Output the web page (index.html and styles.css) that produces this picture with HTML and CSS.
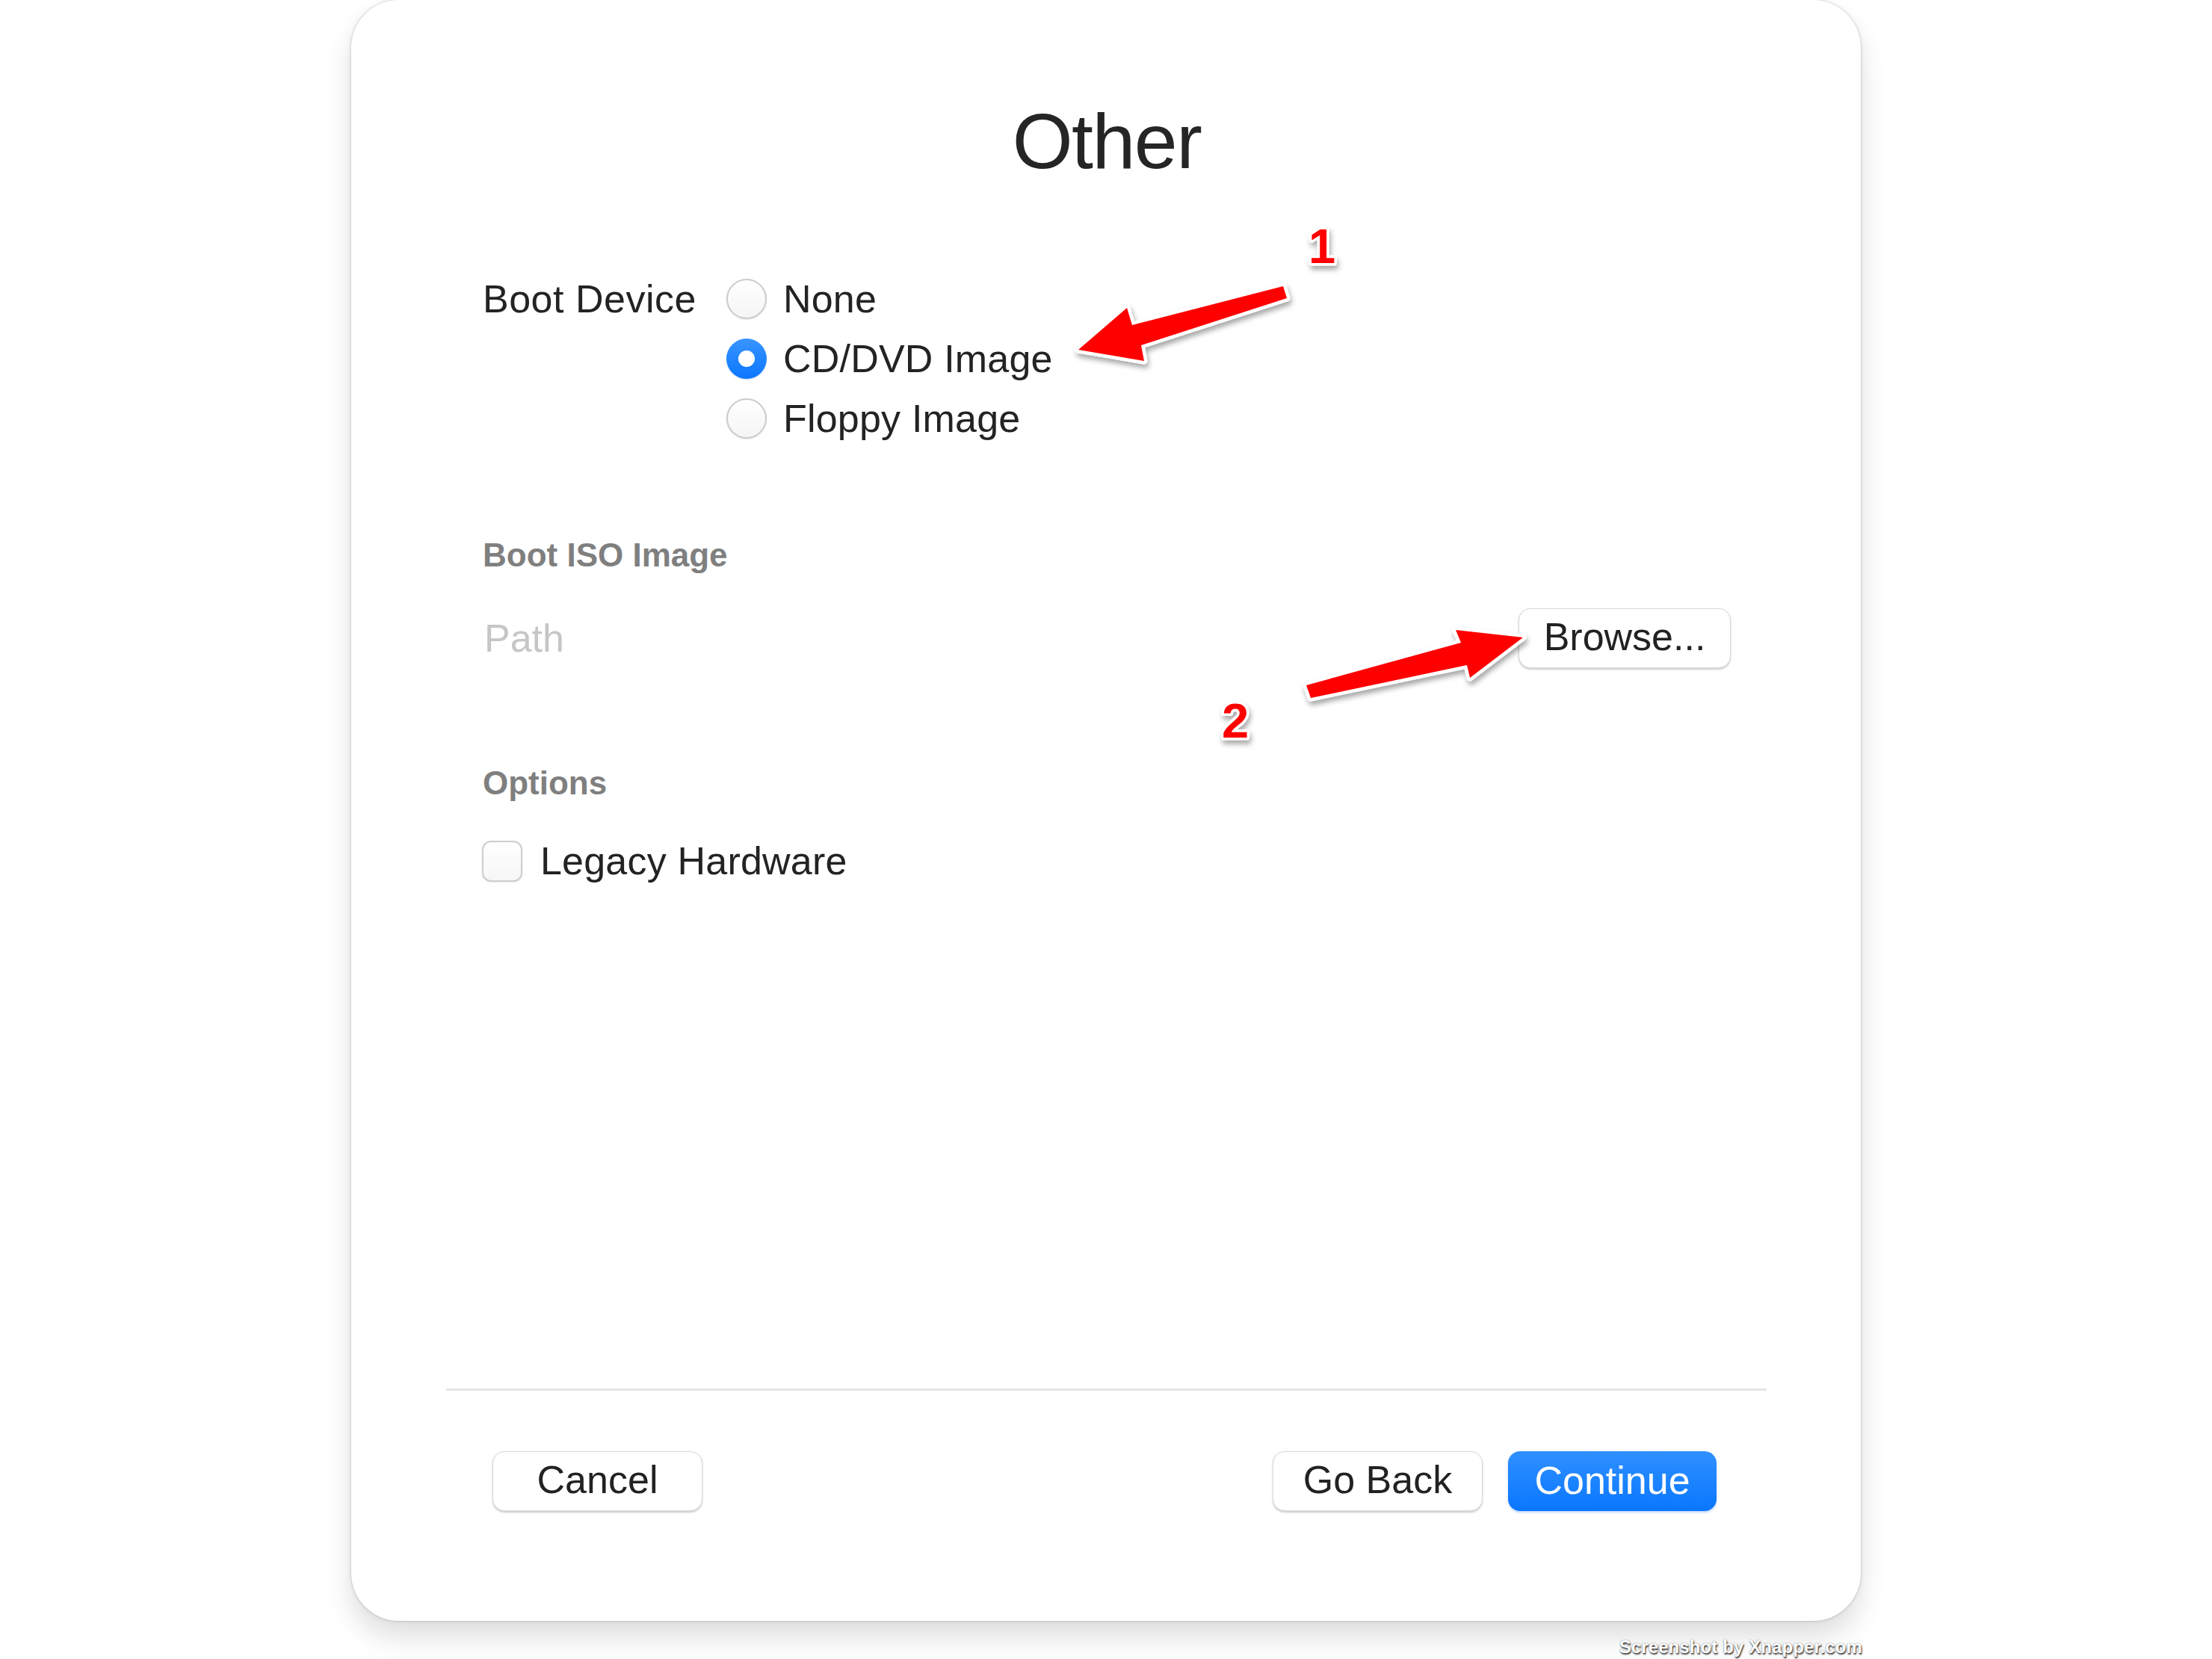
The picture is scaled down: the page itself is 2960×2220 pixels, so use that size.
FILE: index.html
```html
<!DOCTYPE html>
<html lang="en">
<head>
<meta charset="utf-8">
<title>Other</title>
<link rel="stylesheet" href="styles.css">
</head>
<body>
<div class="page">
  <div class="card">
    <h1 class="title">Other</h1>

    <div class="boot">
      <div class="boot-label">Boot Device</div>
      <div class="radios">
        <div class="radio-row"><span class="radio"></span><span class="opt">None</span></div>
        <div class="radio-row"><span class="radio checked"></span><span class="opt">CD/DVD Image</span></div>
        <div class="radio-row"><span class="radio"></span><span class="opt">Floppy Image</span></div>
      </div>
    </div>

    <div class="section-title iso">Boot ISO Image</div>
    <div class="path-row">
      <span class="path">Path</span>
      <button class="btn browse">Browse...</button>
    </div>

    <div class="section-title options">Options</div>
    <div class="check-row"><span class="checkbox"></span><span class="opt">Legacy Hardware</span></div>

    <div class="separator"></div>
    <div class="footer">
      <button class="btn">Cancel</button>
      <div class="footer-right">
        <button class="btn">Go Back</button>
        <button class="btn primary">Continue</button>
      </div>
    </div>
  </div>
  <div class="watermark">Screenshot by Xnapper.com</div>

  <svg class="annotations" width="2960" height="2220" viewBox="0 0 2960 2220">
    <defs>
      <filter id="shadow" x="-20%" y="-20%" width="140%" height="160%">
        <feDropShadow dx="2" dy="5" stdDeviation="3.5" flood-color="#000" flood-opacity="0.35"/>
      </filter>
    </defs>
    <g filter="url(#shadow)">
      <polygon class="arrow" points="1443,468 1508,412 1515,435 1717,383 1722,399 1527,462 1531,483"/>
      <polygon class="arrow" points="2038,853 1948,843 1955,860 1748,917 1754,934 1963,890 1967,907"/>
      <text class="num" x="1751" y="352">1</text>
      <text class="num" x="1635" y="987">2</text>
    </g>
  </svg>
</div>
</body>
</html>
```

FILE: styles.css
```css
html, body {
  margin: 0;
  padding: 0;
  background: #ffffff;
}

body {
  font-family: "Liberation Sans", Arial, sans-serif;
  color: #232323;
}

.page {
  position: relative;
  width: 2960px;
  height: 2220px;
  overflow: hidden;
  background: #ffffff;
}

.card {
  box-sizing: border-box;
  margin-left: 470px;
  width: 2020px;
  height: 2169px;
  padding: 129px 174px 147px 176px;
  display: flex;
  flex-direction: column;
  background: #ffffff;
  border-radius: 64px;
  box-shadow: 0 0 0 1.5px rgba(0, 0, 0, 0.05),
              0 0 6px rgba(0, 0, 0, 0.10),
              0 22px 36px rgba(0, 0, 0, 0.13);
}

.title {
  margin: 0;
  height: 120px;
  line-height: 120px;
  font-size: 104px;
  font-weight: 400;
  letter-spacing: -1.5px;
  text-align: center;
  color: #252525;
}

.boot {
  margin-top: 111px;
  display: flex;
  gap: 38px;
}

.boot-label {
  flex: 0 0 288px;
  height: 80px;
  line-height: 80px;
  font-size: 52px;
  letter-spacing: 0.5px;
}

.radios {
  display: flex;
  flex-direction: column;
}

.radio-row,
.check-row {
  height: 80px;
  display: flex;
  align-items: center;
  gap: 22px;
}

.opt {
  font-size: 52px;
  line-height: 80px;
  letter-spacing: 0.2px;
}

.radio {
  box-sizing: border-box;
  width: 54px;
  height: 54px;
  border-radius: 50%;
  border: 2px solid #cbcbcb;
  background: linear-gradient(#ffffff, #f5f5f5);
  box-shadow: 0 1px 2px rgba(0, 0, 0, 0.10);
  display: flex;
  align-items: center;
  justify-content: center;
}

.radio.checked {
  border: none;
  background: linear-gradient(#3995ff, #0a76ff);
  box-shadow: 0 1px 2px rgba(0, 90, 220, 0.25);
}

.radio.checked::after {
  content: "";
  width: 22px;
  height: 22px;
  border-radius: 50%;
  background: #ffffff;
}

.section-title {
  height: 50px;
  line-height: 50px;
  font-size: 44px;
  font-weight: 700;
  color: #7f7f7f;
}

.iso {
  margin-top: 118px;
}

.path-row {
  margin-top: 46px;
  height: 80px;
  display: flex;
  align-items: center;
  justify-content: space-between;
}

.path {
  padding-left: 2px;
  font-size: 52px;
  line-height: 80px;
  color: #c6c6c6;
}

.options {
  margin-top: 129px;
}

.check-row {
  margin-top: 39px;
  gap: 24px;
}

.checkbox {
  box-sizing: border-box;
  width: 54px;
  height: 55px;
  margin-left: -1px;
  border-radius: 12px;
  border: 2px solid #cdcdcd;
  background: linear-gradient(#ffffff, #f6f6f6);
  box-shadow: 0 1px 2px rgba(0, 0, 0, 0.08);
}

.btn {
  box-sizing: border-box;
  width: 281px;
  height: 80px;
  padding: 0 0 4px 0;
  margin: 0;
  line-height: 74px;
  font-family: "Liberation Sans", Arial, sans-serif;
  font-size: 52px;
  color: #222222;
  text-align: center;
  background: #ffffff;
  border: 1px solid #dadada;
  border-radius: 16px;
  box-shadow: 0 1.5px 2.5px rgba(0, 0, 0, 0.20);
}

.btn.browse {
  width: 284px;
}

.btn.primary {
  width: 279px;
  color: #ffffff;
  border: none;
  padding-top: 1px;
  background: linear-gradient(#2f90ff, #0a77ff);
  box-shadow: 0 1.5px 3px rgba(0, 100, 240, 0.25);
}

.separator {
  margin-top: auto;
  margin-left: -49px;
  margin-right: -48px;
  height: 3px;
  background: #e4e4e4;
}

.footer {
  margin-top: 81px;
  height: 80px;
  padding: 0 19px 0 13px;
  display: flex;
  align-items: center;
  justify-content: space-between;
}

.footer-right {
  display: flex;
  gap: 34px;
}

.watermark {
  margin-top: 23px;
  padding-right: 468px;
  text-align: right;
  font-size: 24px;
  line-height: 24px;
  font-weight: 700;
  letter-spacing: 0.1px;
  color: #ffffff;
  text-shadow: 1px 2px 2px rgba(0, 0, 0, 0.75), 0 0 1.5px rgba(0, 0, 0, 0.6);
}

.annotations {
  position: absolute;
  top: 0;
  left: 0;
  pointer-events: none;
}

.arrow {
  fill: #ff0000;
  stroke: #ffffff;
  stroke-width: 9;
  stroke-linejoin: round;
  paint-order: stroke;
}

.num {
  font-family: "Liberation Sans", Arial, sans-serif;
  font-weight: 700;
  font-size: 65px;
  fill: #ff0000;
  stroke: #ffffff;
  stroke-width: 7;
  stroke-linejoin: round;
  paint-order: stroke;
}
```
